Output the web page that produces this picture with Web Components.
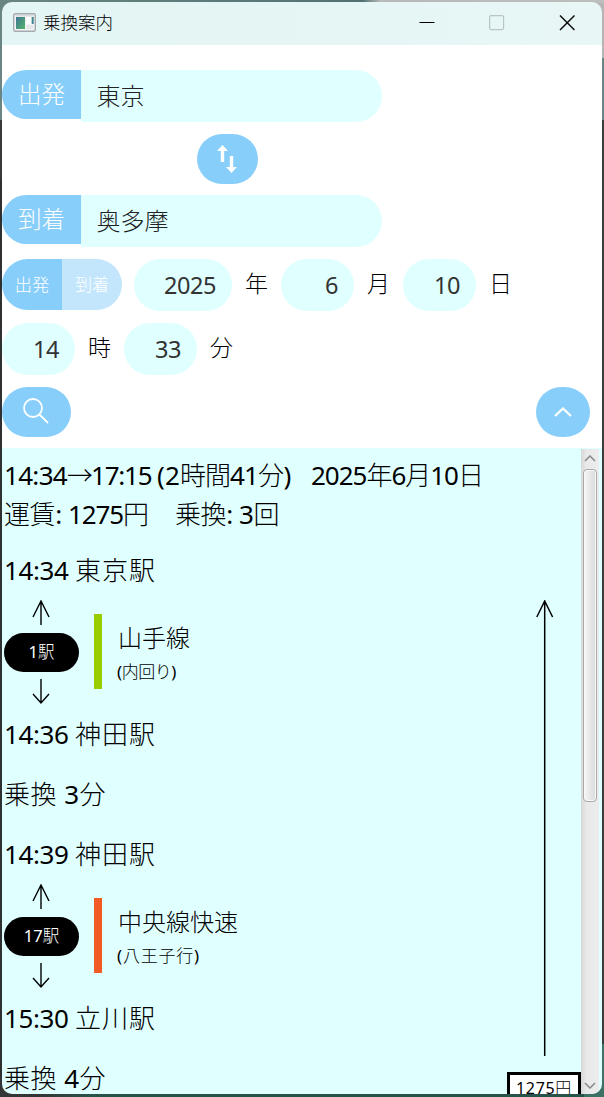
<!DOCTYPE html>
<html lang="ja">
<head>
<meta charset="utf-8">
<title>乗換案内</title>
<style>
html, body { margin: 0; height: 100%; overflow: hidden; }
body {
  background: linear-gradient(90deg, #6a8583 0, #527272 60%, #b9b9b9 63%, #bdbdbd 100%) 0 0 / 100% 3px no-repeat,
    linear-gradient(#b5b5b5 0 58px, #6a8583 58px 120px, #3a3b3d 120px 1044px, #3d7166 1044px) 100% 0 / 20px 100% no-repeat,
    linear-gradient(90deg, #343536 0 40px, #28534a 90px 100%) 0 100% / 100% 20px no-repeat,
    linear-gradient(#6a8583 0 120px, #39393a 120px 180px, #2f3031 180px);
  font-family: "Noto Sans", "Noto Sans CJK JP", sans-serif;
  font-weight: 300;
  color: #000;
}
</style>
</head>
<body>
<transit-app></transit-app>
<script>
const define = (name, html, setup) => {
  const tpl = document.createElement('template');
  tpl.innerHTML = html;
  customElements.define(name, class extends HTMLElement {
    constructor() {
      super();
      this.attachShadow({ mode: 'open' }).append(tpl.content.cloneNode(true));
    }
    connectedCallback() { if (setup) setup(this, this.shadowRoot); }
  });
};

// Inline text whose tracking is adjusted to a given advance width.
// Latin runs are drawn in regular weight beside the light kanji.
define('fit-text', `<style>:host{display:inline;white-space:pre}</style><slot></slot>`, el => {
  if (el.dataset.ready) return;
  el.dataset.ready = '1';
  const text = el.textContent;
  el.replaceChildren(...text.match(/[\x20-\x7e]+|[^\x20-\x7e]+/g).map(run => {
    const s = document.createElement('span');
    s.textContent = run;
    if (/^[\x20-\x7e]/.test(run)) s.style.fontWeight = 400;
    return s;
  }));
  requestAnimationFrame(() => {
    if (!el.hasAttribute('w')) return;
    el.style.letterSpacing = ((+el.getAttribute('w') - el.getBoundingClientRect().width) / [...text].length) + 'px';
  });
});

define('title-bar', `<style>
:host{display:flex;align-items:center;height:43px;background:linear-gradient(90deg,#e3f5f4,#e8f6f6);padding-left:11px;font-size:17.5px;box-sizing:border-box;flex:none}
.t{margin-left:7px;flex:1;line-height:38px;padding-bottom:4px}
svg{display:block;margin-top:-2px}
.b{width:70px;display:flex;justify-content:center}
</style>
<svg width="23" height="19" viewBox="0 0 23 19"><defs><linearGradient id="g" x2="1" y2="1"><stop stop-color="#3c7596"/><stop offset="1" stop-color="#58b468"/></linearGradient></defs><rect x=".7" y=".7" width="21.6" height="17.6" rx="1.5" fill="#f2f4f5" stroke="#a5a9b0" stroke-width="1.4"/><path d="M2 2h19v1.500H2z" fill="#d9dce0"/><rect x="3" y="4" width="9" height="12" fill="url(#g)"/><rect x="13.500" y="4" width="4" height="7" fill="#fff"/><rect x="18.700" y="4" width="2" height="7" fill="#438693"/><rect x="13.500" y="12" width="7" height="4" fill="#e4e6e9"/></svg>
<span class="t"><slot></slot></span>
<span class="b"><svg width="16" height="16"><path d="M.5 7.500h15" stroke="#000"/></svg></span>
<span class="b"><svg width="16" height="16"><rect x=".6" y=".6" width="14" height="14" rx="1.500" fill="none" stroke="#b9c5c5" stroke-width="1.2"/></svg></span>
<span class="b"><svg width="16" height="16"><path d="M1 .5l14.500 14.500M15.500 .5L1 15" stroke="#111" stroke-width="1.5"/></svg></span>`);

define('station-field', `<style>
:host{display:flex;height:52px;width:380px;flex:none}
.l{width:79px;height:49px;background:#87cefa;color:#fff;border-radius:25px 0 0 25px;line-height:49px;text-align:center;font-size:23.500px}
.v{flex:1;background:#e0ffff;border-radius:0 26px 26px 0;line-height:51px;padding-left:15.500px;font-size:24px;color:#222}
</style><div class="l"><slot name="label"></slot></div><div class="v"><slot></slot></div>`);

define('round-button', `<style>
:host{display:flex;align-items:center;justify-content:center;background:#87cefa;border-radius:25px;height:50px;box-sizing:border-box}
</style><slot></slot>`);

define('number-box', `<style>
:host{display:block;height:52px;border-radius:26px;background:#e0ffff;text-align:right;box-sizing:border-box;padding-right:16px;font-size:23.500px;line-height:53px;color:#333}
</style><slot></slot>`);

define('mode-switch', `<style>
:host{display:flex;width:120px;height:51px;border-radius:25.5px;overflow:hidden;color:#fff;font-size:17.300px;line-height:51px;text-align:center}
::slotted(span){flex:1;background:#c3e6fc}
::slotted(span.on){background:#87cefa}
</style><slot></slot>`);

define('search-form', `<style>
:host{display:flex;flex-direction:column;height:403px;padding-top:25px;box-sizing:border-box;background:#fff;flex:none;font-size:23px}
.swap{width:380px;height:50px;margin:12px 0 11px;display:flex}
.swap round-button{width:61px;margin-left:195px}
.row{display:flex;height:52px;margin-top:12px;line-height:49px}
.row i{font-style:normal;display:block}
.foot{display:flex;justify-content:space-between;margin-top:12px;padding-right:12px}
svg{display:block}
</style>
<station-field><span slot="label">出発</span>東京</station-field>
<div class="swap"><round-button><svg width="22" height="28" viewBox="0 0 22 28" fill="#fff" style="margin:-1px 2px 0 0"><path d="M6.500 0L12 6H8.200V17H4.800V6H1zM15.500 28L21 22H17.200V11H13.800V22H10z"/></svg></round-button></div>
<station-field><span slot="label">到着</span>奥多摩</station-field>
<div class="row"><mode-switch><span class="on">出発</span><span>到着</span></mode-switch>
<number-box style="width:98px;margin-left:12px"><fit-text w="52">2025</fit-text></number-box><i style="margin-left:13px;width:36px">年</i>
<number-box style="width:73px"><fit-text w="13">6</fit-text></number-box><i style="margin-left:13px;width:36px">月</i>
<number-box style="width:73px"><fit-text w="26">10</fit-text></number-box><i style="margin-left:13px">日</i></div>
<div class="row"><number-box style="width:73px"><fit-text w="26">14</fit-text></number-box><i style="margin-left:13px;width:36px">時</i>
<number-box style="width:73px"><fit-text w="26">33</fit-text></number-box><i style="margin-left:13px">分</i></div>
<div class="foot"><round-button style="width:69px"><svg width="26" height="26" viewBox="0 0 26 26" fill="none" stroke="#fff" stroke-width="1.800" style="margin:-2px 2px 0 0"><circle cx="10" cy="10" r="9"/><path d="M16.500 16.500L25 25"/></svg></round-button>
<round-button style="width:54px"><svg width="18" height="10" viewBox="0 0 18 10" fill="none" stroke="#fff" stroke-width="2.300"><path d="M1 9l8-7.500L17 9"/></svg></round-button></div>`);

define('result-line', `<style>:host{display:block;height:60px;line-height:58px;white-space:nowrap}</style><slot></slot>`);

define('route-leg', `<style>
:host{display:flex;height:104px}
.c{width:75px;display:flex;flex-direction:column;align-items:center;flex:none}
svg{display:block}
.p{width:75px;height:39px;margin:7px 0 7px;border-radius:20px;background:#000;color:#fff;text-align:center;font-size:16.500px;line-height:38px}
.bar{width:8px;height:75px;background:var(--line);margin:13px 16px 0 15px}
.n{font-size:24px;line-height:36px;margin-top:19px}
.d{font-size:17px;line-height:32px;margin-left:-1px}
</style>
<div class="c"><svg width="18" height="26" viewBox="0 0 18 26" fill="none" stroke="#000" stroke-width="1.400" style="margin:-1px 1px 0 0"><path d="M9 1V25M1 17L9 1l8 16"/></svg><div class="p"><slot name="count"></slot></div><svg width="18" height="26" viewBox="0 0 18 26" fill="none" stroke="#000" stroke-width="1.400" style="margin-right:1px"><path d="M9 0V24M1 15l8 9 8-9"/></svg></div>
<div class="bar"></div><div><div class="n"><slot name="name"></slot></div><div class="d"><slot name="dest"></slot></div></div>`);

define('fare-column', `<style>
:host{display:flex;flex-direction:column;width:74px;padding-top:59px;flex:none}
svg{display:block;margin-left:28px}
.f{margin-top:15px;height:40px;border:3px solid #000;background:#fff;box-sizing:border-box;font-size:16px;line-height:27px;text-align:center}
</style>
<svg width="20" height="457" viewBox="0 0 20 457" fill="none" stroke="#000" stroke-width="1.500"><path d="M9.700 1V456M1.800 17L9.700 1l7.900 16"/></svg>
<div class="f"><slot></slot></div>`);

define('scroll-bar', `<style>
:host{display:flex;flex-direction:column;align-items:center;width:18px;margin:1px 3px 0 0;background:linear-gradient(90deg,#d7d7d7,#e9e9e9 30%,#ececec);flex:none;box-sizing:border-box}
.up{margin-top:6px}.dn{margin:auto 0 5px}
svg{display:block}
.th{width:14px;height:333px;margin-top:7px;box-sizing:border-box;border:1.500px solid #aaa;border-radius:4px;background:linear-gradient(90deg,#f7f7f7,#e4e4e4 60%,#dcdcdc);box-shadow:inset 0 0 0 1px #f8f8f8}
</style>
<svg class="up" width="12" height="7"><path d="M1 6l5-5 5 5" fill="none" stroke="#888" stroke-width="1.500"/></svg>
<div class="th"></div>
<svg class="dn" width="12" height="7"><path d="M1 1l5 5 5-5" fill="none" stroke="#888" stroke-width="1.500"/></svg>`);

define('route-results', `<style>
:host{display:flex;flex:1;min-height:0;background:#e0ffff;overflow:hidden;font-size:26px}
.main{flex:1;padding:8px 0 0 2px;min-width:0}
.sum{line-height:39px;height:39px;white-space:pre}
.body{display:flex;margin-top:7px}
.legs{flex:1}
</style>
<div class="main">
<div class="sum"><fit-text w="63">14:34</fit-text><fit-text w="24">→</fit-text><fit-text w="66">17:15 </fit-text><fit-text w="23">(2</fit-text><fit-text w="50">時間</fit-text><fit-text w="28">41</fit-text><fit-text w="33">分)</fit-text><fit-text w="20">　</fit-text><fit-text w="172">2025年6月10日</fit-text></div>
<div class="sum"><fit-text w="64">運賃: </fit-text><fit-text w="80">1275円</fit-text><fit-text w="27">　</fit-text><fit-text w="64">乗換: </fit-text><fit-text w="40">3回</fit-text></div>
<div class="body"><div class="legs">
<result-line><fit-text w="71">14:34 </fit-text><fit-text w="81">東京駅</fit-text></result-line>
<route-leg style="--line:#9acd00"><fit-text slot="count">1駅</fit-text><span slot="name">山手線</span><fit-text w="59" slot="dest">(内回り)</fit-text></route-leg>
<result-line><fit-text w="71">14:36 </fit-text><fit-text w="81">神田駅</fit-text></result-line>
<result-line><fit-text w="102">乗換 3分</fit-text></result-line>
<result-line><fit-text w="71">14:39 </fit-text><fit-text w="81">神田駅</fit-text></result-line>
<route-leg style="--line:#f15a24"><fit-text slot="count">17駅</fit-text><span slot="name">中央線快速</span><fit-text w="83" slot="dest">(八王子行)</fit-text></route-leg>
<result-line><fit-text w="71">15:30 </fit-text><fit-text w="81">立川駅</fit-text></result-line>
<result-line><fit-text w="102">乗換 4分</fit-text></result-line>
</div><fare-column><fit-text w="56">1275円</fit-text></fare-column></div>
</div><scroll-bar></scroll-bar>`);

define('transit-app', `<style>
:host{display:flex;flex-direction:column;margin:0 0 0 2px;width:600px;height:1092px;border-radius:10px;overflow:hidden;position:relative;top:2px}
</style><title-bar>乗換案内</title-bar><search-form></search-form><route-results></route-results>`);
</script>
</body>
</html>
